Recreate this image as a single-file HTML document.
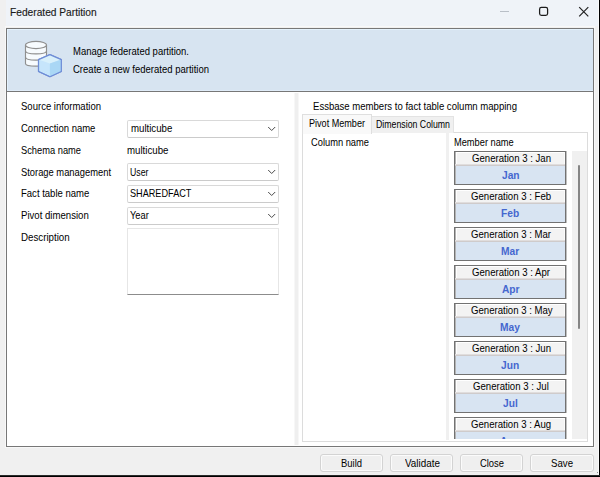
<!DOCTYPE html>
<html><head><meta charset="utf-8"><style>
html,body{margin:0;padding:0;}
body{width:600px;height:477px;overflow:hidden;position:relative;background:#f0f0f0;font-family:"Liberation Sans",sans-serif;}
.abs{position:absolute;}
.t{position:absolute;white-space:nowrap;line-height:13px;transform-origin:0 0;}
.combo{position:absolute;left:127px;width:150px;height:16px;border:1px solid #d9d9d9;border-bottom-color:#cbcbcb;border-radius:2px;background:#fff;}
.card{position:absolute;left:4px;width:110px;height:32px;border:1px solid #727272;background:#d8e4f2;box-shadow:inset 1px 0 0 #b4b4b4, 1px 0 0 #c0c0c0;}
.card .ch{position:absolute;left:1px;top:0;width:109px;height:12px;background:#f3f3f3;border-top:1px solid #fff;border-left:1px solid #fff;border-right:1px solid #fbfbfb;box-sizing:border-box;}
.card .cb{position:absolute;left:0;top:12px;width:110px;height:1px;background:#e0dddd;border-bottom:1px solid #cfcbcb;}
.btn{position:absolute;top:454px;height:16px;border:1px solid #d3d3d3;border-radius:3px;background:#efefef;box-shadow:inset 0 0 0 1px #fbfbfb;}
</style></head><body>
<div class="abs" style="left:6px;top:0;width:592px;height:26px;background:#eff3f8"></div>
<div class="abs" style="left:598px;top:0;width:1px;height:477px;background:#fafafa"></div>
<div class="abs" style="left:599px;top:0;width:1px;height:477px;background:#000"></div>
<div class="abs" style="left:0;top:475px;width:600px;height:1px;background:#2a2a2a"></div>
<div class="abs" style="left:0;top:476px;width:600px;height:1px;background:#000"></div>
<div class="abs" style="left:597px;top:472px;width:1px;height:1px;background:#8a8a8a"></div>
<!-- title buttons -->
<div class="abs" style="left:500px;top:11px;width:9px;height:1px;background:#b9bfc7"></div>
<svg class="abs" style="left:537px;top:5px" width="14" height="14" viewBox="0 0 14 14"><rect x="2.6" y="2.4" width="8" height="8" rx="1.8" fill="none" stroke="#1c1c1c" stroke-width="1.25"/></svg>
<svg class="abs" style="left:578px;top:6px" width="12" height="12" viewBox="0 0 12 12"><path d="M1.2 1.2 L10.3 10.3 M10.3 1.2 L1.2 10.3" stroke="#222" stroke-width="1.2"/></svg>
<!-- frame -->
<div class="abs" style="left:5px;top:26px;width:588px;height:420px;border:1px solid #f8f8f8"></div>
<div class="abs" style="left:6px;top:28px;width:586px;height:417px;border:1px solid #777;background:#fff"></div>
<div class="abs" style="left:7px;top:29px;width:586px;height:62px;background:#d7e4f1;border-top:1px solid #e4f2fd;border-left:1px solid #e4f2fd;border-bottom:1px solid #e0ecf8;box-sizing:border-box"></div>
<div class="abs" style="left:7px;top:91px;width:586px;height:1px;background:#777"></div>
<svg class="abs" style="left:20px;top:35px" width="50" height="50" viewBox="0 0 50 50">
<g fill="#f7fbfe" stroke="#8f8f8f" stroke-width="1.15">
<path d="M5.5 10 V28.5 C5.5 32 26.5 32 26.5 28.5 V10"/>
<ellipse cx="16" cy="10" rx="10.5" ry="3.6"/>
<path d="M5.5 16 C5.5 19.8 26.5 19.8 26.5 16" fill="none"/>
<path d="M5.5 22.2 C5.5 26 26.5 26 26.5 22.2" fill="none"/>
</g>
<g stroke="#6f8dd6" stroke-width="1.15" stroke-linejoin="round">
<path d="M29.9 19.6 L41.3 24.6 L41.3 36.6 L29.9 41.7 L18.5 36.6 L18.5 24.6 Z" fill="#c6e5fb"/>
<path d="M29.9 19.6 L41.3 24.6 L29.9 28.6 L18.5 24.6 Z" fill="#d9f0fb" stroke="none"/>
<path d="M29.9 28.6 L41.3 24.6 L41.3 36.6 L29.9 41.7 Z" fill="#aad7f5" stroke="none"/>
<path d="M29.9 19.6 L41.3 24.6 L41.3 36.6 L29.9 41.7 L18.5 36.6 L18.5 24.6 Z" fill="none"/>
</g>
</svg>
<!-- splitter -->
<div class="abs" style="left:294px;top:93px;width:5px;height:352px;background:#f7f7f7"></div>
<div class="abs" style="left:295px;top:93px;width:3px;height:352px;background:#efefef"></div>
<div class="combo" style="top:120px"><svg class="abs" style="left:139px;top:5px" width="10" height="6" viewBox="0 0 10 6"><path d="M1.2 1 L4.7 4.5 L8.2 1" fill="none" stroke="#4a4a4a" stroke-width="1"/></svg></div><div class="combo" style="top:163px"><svg class="abs" style="left:139px;top:5px" width="10" height="6" viewBox="0 0 10 6"><path d="M1.2 1 L4.7 4.5 L8.2 1" fill="none" stroke="#4a4a4a" stroke-width="1"/></svg></div><div class="combo" style="top:185px"><svg class="abs" style="left:139px;top:5px" width="10" height="6" viewBox="0 0 10 6"><path d="M1.2 1 L4.7 4.5 L8.2 1" fill="none" stroke="#4a4a4a" stroke-width="1"/></svg></div><div class="combo" style="top:207px"><svg class="abs" style="left:139px;top:5px" width="10" height="6" viewBox="0 0 10 6"><path d="M1.2 1 L4.7 4.5 L8.2 1" fill="none" stroke="#4a4a4a" stroke-width="1"/></svg></div>
<div class="abs" style="left:127px;top:228px;width:150px;height:65px;border:1px solid #e6e6e6;border-bottom:1px solid #8c8c8c;background:#fff"></div>
<!-- tabs -->
<div class="abs" style="left:302px;top:132px;width:284px;height:308px;border:1px solid #dcdcdc;background:#fff"></div>
<div class="abs" style="left:371px;top:116px;width:81px;height:16px;border:1px solid #e3e3e3;border-bottom:none;background:#f0f0f0"></div>
<div class="abs" style="left:302px;top:114px;width:68px;height:19px;border:1px solid #dfdfdf;border-bottom:none;background:#f9f9f9"></div>
<div class="abs" style="left:446px;top:133px;width:3px;height:307px;background:#f0f0f0"></div>
<div class="abs" style="left:450px;top:150px;width:122px;height:289px;overflow:hidden">
<div class="card" style="top:1px"><div class="ch"></div><div class="cb"></div></div><div class="card" style="top:39px"><div class="ch"></div><div class="cb"></div></div><div class="card" style="top:77px"><div class="ch"></div><div class="cb"></div></div><div class="card" style="top:115px"><div class="ch"></div><div class="cb"></div></div><div class="card" style="top:153px"><div class="ch"></div><div class="cb"></div></div><div class="card" style="top:191px"><div class="ch"></div><div class="cb"></div></div><div class="card" style="top:229px"><div class="ch"></div><div class="cb"></div></div><div class="card" style="top:267px"><div class="ch"></div><div class="cb"></div></div>
<span class="t" style="left:21.89px;top:2.31px;font-size:11px;font-weight:400;color:#000;transform:scaleX(0.8730)">Generation 3 : Jan</span><span class="t" style="left:51.60px;top:18.71px;font-size:11px;font-weight:700;color:#4567cf;transform:scaleX(0.9278)">Jan</span><span class="t" style="left:21.36px;top:40.31px;font-size:11px;font-weight:400;color:#000;transform:scaleX(0.8730)">Generation 3 : Feb</span><span class="t" style="left:51.32px;top:56.71px;font-size:11px;font-weight:700;color:#4567cf;transform:scaleX(0.9278)">Feb</span><span class="t" style="left:21.36px;top:78.31px;font-size:11px;font-weight:400;color:#000;transform:scaleX(0.8730)">Generation 3 : Mar</span><span class="t" style="left:51.32px;top:94.71px;font-size:11px;font-weight:700;color:#4567cf;transform:scaleX(0.9278)">Mar</span><span class="t" style="left:22.43px;top:116.31px;font-size:11px;font-weight:400;color:#000;transform:scaleX(0.8730)">Generation 3 : Apr</span><span class="t" style="left:51.61px;top:132.71px;font-size:11px;font-weight:700;color:#4567cf;transform:scaleX(0.9278)">Apr</span><span class="t" style="left:20.56px;top:154.31px;font-size:11px;font-weight:400;color:#000;transform:scaleX(0.8730)">Generation 3 : May</span><span class="t" style="left:50.47px;top:170.71px;font-size:11px;font-weight:700;color:#4567cf;transform:scaleX(0.9278)">May</span><span class="t" style="left:21.89px;top:192.31px;font-size:11px;font-weight:400;color:#000;transform:scaleX(0.8730)">Generation 3 : Jun</span><span class="t" style="left:51.32px;top:208.71px;font-size:11px;font-weight:700;color:#4567cf;transform:scaleX(0.9278)">Jun</span><span class="t" style="left:23.49px;top:230.31px;font-size:11px;font-weight:400;color:#000;transform:scaleX(0.8730)">Generation 3 : Jul</span><span class="t" style="left:53.02px;top:246.71px;font-size:11px;font-weight:700;color:#4567cf;transform:scaleX(0.9278)">Jul</span><span class="t" style="left:21.36px;top:268.31px;font-size:11px;font-weight:400;color:#000;transform:scaleX(0.8730)">Generation 3 : Aug</span><span class="t" style="left:50.48px;top:284.71px;font-size:11px;font-weight:700;color:#4567cf;transform:scaleX(0.9278)">Aug</span>
</div>
<div class="abs" style="left:572px;top:151px;width:15px;height:288px;background:#f0f0f0"></div>
<div class="abs" style="left:578px;top:165px;width:2px;height:164px;background:#858585;border-radius:1px"></div>
<div class="btn" style="left:320px;width:61px"></div><div class="btn" style="left:390px;width:61px"></div><div class="btn" style="left:460px;width:61px"></div><div class="btn" style="left:530px;width:62px"></div>
<span class="t" style="left:10.00px;top:5.90px;font-size:11.5px;font-weight:400;color:#1a1a1a;-webkit-text-stroke:0.15px #1a1a1a;transform:scaleX(0.8864)">Federated Partition</span><span class="t" style="left:73.00px;top:44.71px;font-size:11px;font-weight:400;color:#000;transform:scaleX(0.8622)">Manage federated partition.</span><span class="t" style="left:73.00px;top:62.71px;font-size:11px;font-weight:400;color:#000;transform:scaleX(0.8654)">Create a new federated partition</span><span class="t" style="left:21.00px;top:99.71px;font-size:11px;font-weight:400;color:#000;transform:scaleX(0.8665)">Source information</span><span class="t" style="left:21.00px;top:121.71px;font-size:11px;font-weight:400;color:#000;transform:scaleX(0.8628)">Connection name</span><span class="t" style="left:21.00px;top:143.71px;font-size:11px;font-weight:400;color:#000;transform:scaleX(0.8458)">Schema name</span><span class="t" style="left:21.00px;top:165.71px;font-size:11px;font-weight:400;color:#000;transform:scaleX(0.8507)">Storage management</span><span class="t" style="left:21.00px;top:186.71px;font-size:11px;font-weight:400;color:#000;transform:scaleX(0.8659)">Fact table name</span><span class="t" style="left:21.00px;top:208.71px;font-size:11px;font-weight:400;color:#000;transform:scaleX(0.8731)">Pivot dimension</span><span class="t" style="left:21.00px;top:230.71px;font-size:11px;font-weight:400;color:#000;transform:scaleX(0.8850)">Description</span><span class="t" style="left:131.00px;top:122.21px;font-size:11px;font-weight:400;color:#000;transform:scaleX(0.8773)">multicube</span><span class="t" style="left:126.60px;top:144.21px;font-size:11px;font-weight:400;color:#000;transform:scaleX(0.8794)">multicube</span><span class="t" style="left:130.40px;top:166.21px;font-size:11px;font-weight:400;color:#000;transform:scaleX(0.7962)">User</span><span class="t" style="left:130.40px;top:187.21px;font-size:11px;font-weight:400;color:#000;transform:scaleX(0.8301)">SHAREDFACT</span><span class="t" style="left:130.40px;top:209.21px;font-size:11px;font-weight:400;color:#000;transform:scaleX(0.8455)">Year</span><span class="t" style="left:312.60px;top:99.71px;font-size:11px;font-weight:400;color:#000;transform:scaleX(0.8689)">Essbase members to fact table column mapping</span><span class="t" style="left:308.80px;top:116.71px;font-size:11px;font-weight:400;color:#000;transform:scaleX(0.8252)">Pivot Member</span><span class="t" style="left:376.00px;top:118.21px;font-size:11px;font-weight:400;color:#000;transform:scaleX(0.7962)">Dimension Column</span><span class="t" style="left:310.70px;top:136.41px;font-size:11px;font-weight:400;color:#000;transform:scaleX(0.8469)">Column name</span><span class="t" style="left:454.00px;top:136.41px;font-size:11px;font-weight:400;color:#000;transform:scaleX(0.8418)">Member name</span><span class="t" style="left:341.20px;top:456.71px;font-size:11px;font-weight:400;color:#000;transform:scaleX(0.8582)">Build</span><span class="t" style="left:404.50px;top:456.71px;font-size:11px;font-weight:400;color:#000;transform:scaleX(0.8989)">Validate</span><span class="t" style="left:480.00px;top:456.71px;font-size:11px;font-weight:400;color:#000;transform:scaleX(0.8533)">Close</span><span class="t" style="left:551.30px;top:456.71px;font-size:11px;font-weight:400;color:#000;transform:scaleX(0.8773)">Save</span>
</body></html>
